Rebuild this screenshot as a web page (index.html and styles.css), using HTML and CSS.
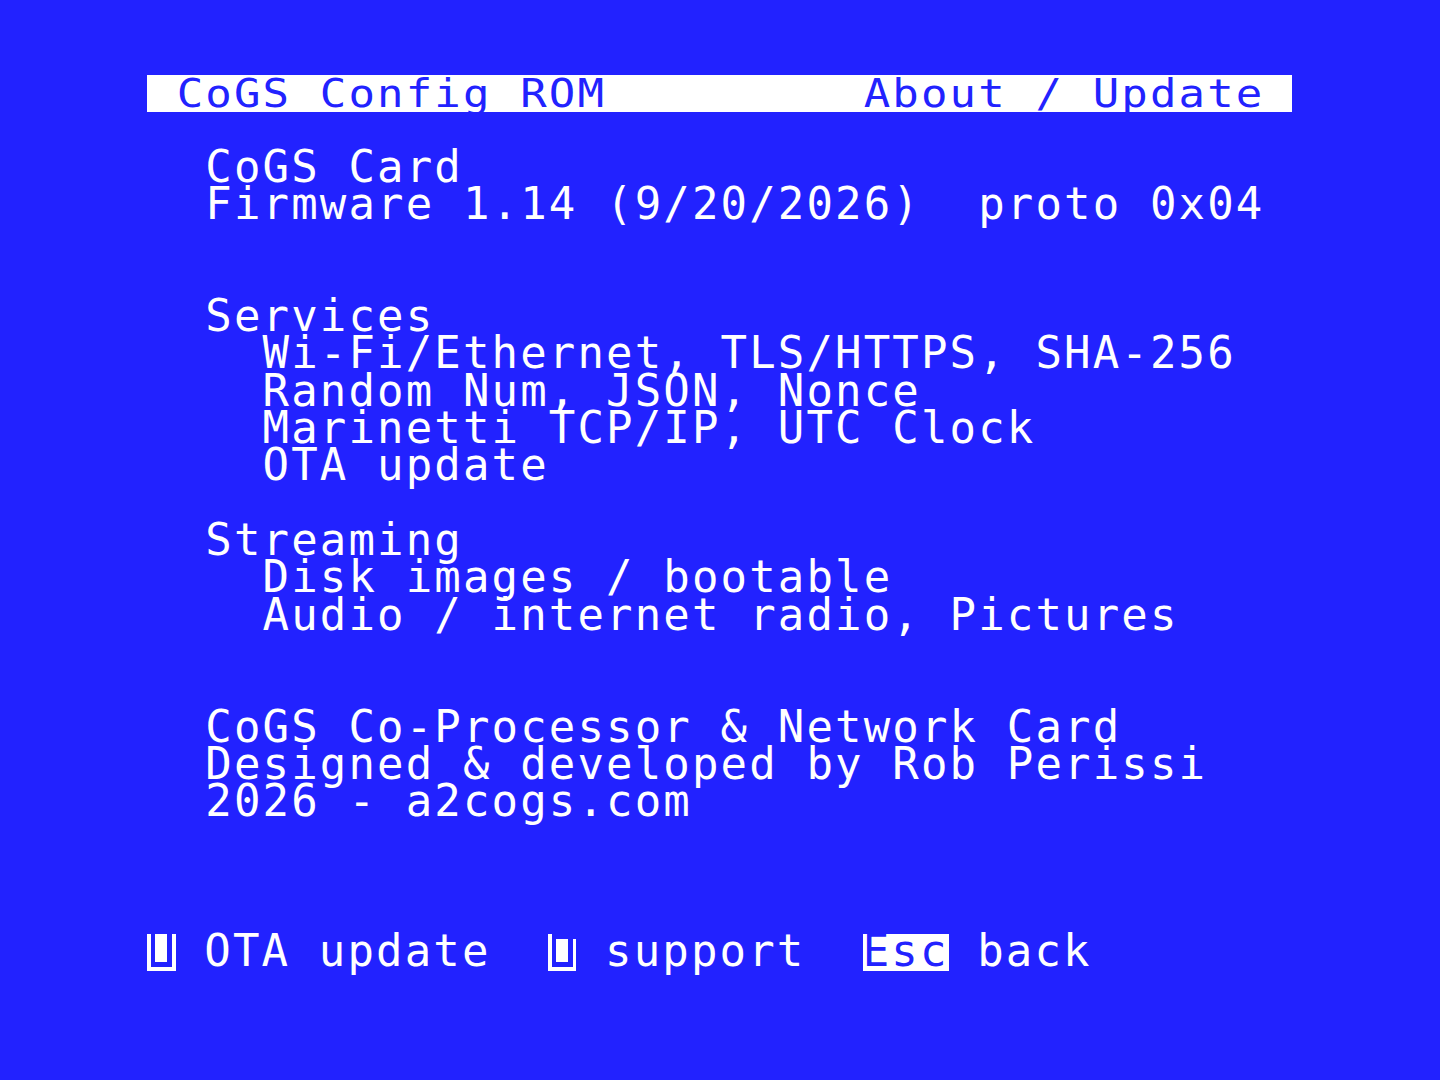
FILE: index.html
```html
<!DOCTYPE html>
<html lang="en">
<head>
<meta charset="utf-8">
<title>CoGS Config ROM</title>
<link rel="stylesheet" href="styles.css">
</head>
<body>
<main class="screen">
  <div class="row bar"><span class="bar-text"> CoGS Config ROM         About / Update </span></div>
  <div class="row"></div>
  <div class="row">  CoGS Card</div>
  <div class="row">  Firmware 1.14 (9/20/2026)  proto 0x04</div>
  <div class="row"></div>
  <div class="row"></div>
  <div class="row">  Services</div>
  <div class="row">    Wi-Fi/Ethernet, TLS/HTTPS, SHA-256</div>
  <div class="row">    Random Num, JSON, Nonce</div>
  <div class="row">    Marinetti TCP/IP, UTC Clock</div>
  <div class="row">    OTA update</div>
  <div class="row"></div>
  <div class="row">  Streaming</div>
  <div class="row">    Disk images / bootable</div>
  <div class="row">    Audio / internet radio, Pictures</div>
  <div class="row"></div>
  <div class="row"></div>
  <div class="row">  CoGS Co-Processor &amp; Network Card</div>
  <div class="row">  Designed &amp; developed by Rob Perissi</div>
  <div class="row">  2026 - a2cogs.com</div>
  <div class="row"></div>
  <div class="row"></div>
  <div class="row"></div>
  <div class="row keys"><svg class="key-icon" viewBox="0 0 7 8" preserveAspectRatio="none" shape-rendering="crispEdges"><path fill="#fff" d="M0 0h1v7h5v-7h1v8h-7z M2 0h3v6h-3z"/></svg> OTA update  <svg class="key-icon" viewBox="0 0 7 8" preserveAspectRatio="none" shape-rendering="crispEdges"><path fill="#fff" d="M0 0h1v7h5v-6h1v7h-7z M2 1h3v5h-3z"/></svg> support  <span class="inverse">Esc</span> back</div>
</main>
</body>
</html>
```
FILE: styles.css
```css
html, body {
  margin: 0;
  padding: 0;
  background: #2222ff;
}

body {
  width: 1440px;
  height: 1080px;
  overflow: hidden;
}

.screen {
  display: flex;
  flex-direction: column;
  width: 1145px;
  padding: 75px 0 0 147px;
  font-family: "DejaVu Sans Mono", "Liberation Mono", monospace;
  font-size: 44px;
  color: #ffffff;
}

.row {
  height: 37.333px;
  line-height: 34px;
  white-space: pre;
  letter-spacing: 2.135px;
  padding-left: 1px;
}

.bar {
  background: #ffffff;
  color: #2222ff;
  padding-left: 0;
}

.bar-text {
  display: inline-block;
  height: 37.333px;
  line-height: 37.7px;
  transform: scaleY(0.88);
  transform-origin: 50% 50%;
  padding-left: 1px;
}

.keys {
  padding-left: 0;
}

.key-icon {
  display: inline-block;
  vertical-align: top;
  width: 28.625px;
  height: 37.333px;
}

.inverse {
  display: inline-block;
  vertical-align: top;
  height: 37.333px;
  background: #ffffff;
  color: #2222ff;
}
```
